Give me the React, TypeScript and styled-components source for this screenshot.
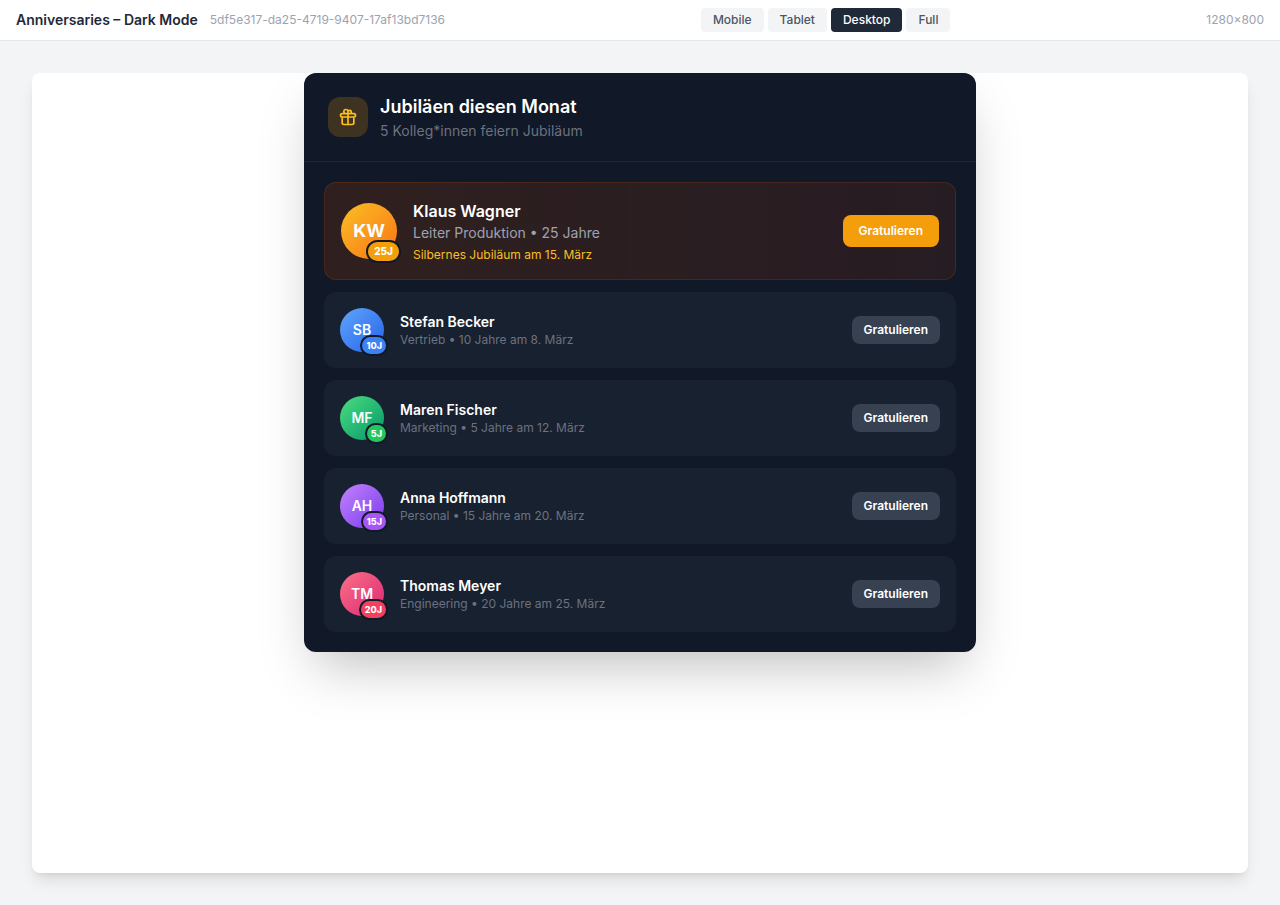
import React from "react";
import styled, { createGlobalStyle, css } from "styled-components";

const GlobalStyle = createGlobalStyle`
  *, *::before, *::after { box-sizing: border-box; }
  body {
    margin: 0;
    background: #f3f4f6;
    font-family: Inter, "Liberation Sans", sans-serif;
    color: #1f2937;
  }
  h1, h2, h3, p, ul { margin: 0; padding: 0; }
  button { font-family: inherit; border: 0; cursor: pointer; }
`;

const Toolbar = styled.header`
  display: flex;
  align-items: center;
  justify-content: space-between;
  padding: 8px 16px;
  background: #ffffff;
  border-bottom: 1px solid #e5e7eb;
`;

const TitleGroup = styled.div`
  display: flex;
  align-items: center;
  gap: 12px;
`;

const PageTitle = styled.h1`
  font-size: 14px;
  line-height: 20px;
  font-weight: 600;
`;

const MetaText = styled.span`
  font-size: 12px;
  line-height: 16px;
  color: #9ca3af;
`;

const SizeSwitch = styled.nav`
  display: flex;
  gap: 4px;
`;

const SizeButton = styled.button<{ $active: boolean }>`
  padding: 4px 12px;
  border-radius: 4px;
  font-size: 12px;
  line-height: 16px;
  font-weight: 500;
  color: ${(p) => (p.$active ? "#ffffff" : "#4b5563")};
  background: ${(p) => (p.$active ? "#1f2937" : "#f3f4f6")};
`;

const Stage = styled.main`
  padding: 32px;
`;

const Frame = styled.div`
  max-width: 1280px;
  min-height: 800px;
  margin: 0 auto;
  background: #ffffff;
  border-radius: 8px;
  overflow: hidden;
  box-shadow: 0 10px 15px -3px rgba(0, 0, 0, 0.1), 0 4px 6px -4px rgba(0, 0, 0, 0.1);
`;

const Card = styled.section`
  max-width: 672px;
  margin: 0 auto;
  overflow: hidden;
  background: #111827;
  border-radius: 12px;
  box-shadow: 0 25px 50px -12px rgba(0, 0, 0, 0.25);
`;

const CardHeader = styled.div`
  display: flex;
  align-items: center;
  gap: 12px;
  padding: 20px 24px;
  border-bottom: 1px solid #1f2937;
`;

const IconTile = styled.div`
  display: flex;
  align-items: center;
  justify-content: center;
  width: 40px;
  height: 40px;
  border-radius: 12px;
  background: rgba(245, 158, 11, 0.2);
  color: #fbbf24;
`;

const CardTitle = styled.h2`
  font-size: 18px;
  line-height: 28px;
  font-weight: 600;
  color: #ffffff;
`;

const CardSubtitle = styled.p`
  font-size: 14px;
  line-height: 20px;
  color: #6b7280;
`;

const PeopleList = styled.ul`
  display: flex;
  flex-direction: column;
  gap: 12px;
  padding: 20px;
  list-style: none;
`;

const PersonRow = styled.li<{ $featured?: boolean }>`
  display: flex;
  align-items: center;
  gap: 16px;
  padding: 16px;
  border-radius: 12px;
  background: rgba(31, 41, 55, 0.5);
  ${(p) =>
    p.$featured &&
    css`
      background: linear-gradient(to right, rgba(120, 53, 15, 0.3), rgba(124, 45, 18, 0.2));
      border: 1px solid rgba(146, 64, 14, 0.3);
    `}
`;

const Avatar = styled.div<{ $from: string; $to: string; $large?: boolean }>`
  position: relative;
  display: flex;
  flex-shrink: 0;
  align-items: center;
  justify-content: center;
  width: ${(p) => (p.$large ? 56 : 44)}px;
  height: ${(p) => (p.$large ? 56 : 44)}px;
  border-radius: 50%;
  background: linear-gradient(to bottom right, ${(p) => p.$from}, ${(p) => p.$to});
  color: #ffffff;
  font-size: ${(p) => (p.$large ? 18 : 14)}px;
  line-height: 20px;
  font-weight: ${(p) => (p.$large ? 700 : 600)};
`;

const YearBadge = styled.span<{ $color: string; $large?: boolean }>`
  position: absolute;
  right: -4px;
  bottom: -4px;
  padding: 2px ${(p) => (p.$large ? 6 : 4)}px;
  border: 2px solid #111827;
  border-radius: 999px;
  background: ${(p) => p.$color};
  font-size: ${(p) => (p.$large ? 10 : 9)}px;
  line-height: ${(p) => (p.$large ? 15 : 13)}px;
  font-weight: 800;
`;

const PersonInfo = styled.div`
  flex: 1;
  min-width: 0;
`;

const PersonName = styled.h3<{ $large?: boolean }>`
  font-size: ${(p) => (p.$large ? 16 : 14)}px;
  line-height: ${(p) => (p.$large ? 24 : 20)}px;
  font-weight: 600;
  color: #ffffff;
`;

const PersonDetail = styled.p<{ $large?: boolean }>`
  font-size: ${(p) => (p.$large ? 14 : 12)}px;
  line-height: ${(p) => (p.$large ? 20 : 16)}px;
  color: ${(p) => (p.$large ? "#9ca3af" : "#6b7280")};
`;

const PersonNote = styled.p`
  margin-top: 4px;
  font-size: 12px;
  line-height: 16px;
  color: #fbbf24;
`;

const CongratulateButton = styled.button<{ $primary?: boolean }>`
  flex-shrink: 0;
  padding: ${(p) => (p.$primary ? "8px 16px" : "6px 12px")};
  border-radius: 8px;
  background: ${(p) => (p.$primary ? "#f59e0b" : "#374151")};
  color: #ffffff;
  font-size: 12px;
  line-height: 16px;
  font-weight: 600;
`;

interface Person {
  name: string;
  initials: string;
  years: number;
  detail: string;
  note?: string;
  from: string;
  to: string;
  badge: string;
}

const people: Person[] = [
  {
    name: "Klaus Wagner",
    initials: "KW",
    years: 25,
    detail: "Leiter Produktion • 25 Jahre",
    note: "Silbernes Jubiläum am 15. März",
    from: "#fbbf24",
    to: "#f97316",
    badge: "#f59e0b",
  },
  {
    name: "Stefan Becker",
    initials: "SB",
    years: 10,
    detail: "Vertrieb • 10 Jahre am 8. März",
    from: "#60a5fa",
    to: "#2563eb",
    badge: "#3b82f6",
  },
  {
    name: "Maren Fischer",
    initials: "MF",
    years: 5,
    detail: "Marketing • 5 Jahre am 12. März",
    from: "#4ade80",
    to: "#059669",
    badge: "#22c55e",
  },
  {
    name: "Anna Hoffmann",
    initials: "AH",
    years: 15,
    detail: "Personal • 15 Jahre am 20. März",
    from: "#c084fc",
    to: "#7c3aed",
    badge: "#a855f7",
  },
  {
    name: "Thomas Meyer",
    initials: "TM",
    years: 20,
    detail: "Engineering • 20 Jahre am 25. März",
    from: "#fb7185",
    to: "#db2777",
    badge: "#f43f5e",
  },
];

const sizes = ["Mobile", "Tablet", "Desktop", "Full"];

function GiftIcon() {
  return (
    <svg
      width="20"
      height="20"
      viewBox="0 0 24 24"
      fill="none"
      stroke="currentColor"
      strokeWidth="2"
      strokeLinecap="round"
      strokeLinejoin="round"
      aria-hidden="true"
    >
      <path d="M12 8v13m0-13V6a2 2 0 112 2h-2zm0 0V5.5A2.5 2.5 0 109.5 8H12zm-7 4h14M5 12a2 2 0 110-4h14a2 2 0 110 4M5 12v7a2 2 0 002 2h10a2 2 0 002-2v-7" />
    </svg>
  );
}

export default function App() {
  const [size, setSize] = React.useState("Desktop");

  return (
    <>
      <GlobalStyle />
      <Toolbar>
        <TitleGroup>
          <PageTitle>Anniversaries – Dark Mode</PageTitle>
          <MetaText>5df5e317-da25-4719-9407-17af13bd7136</MetaText>
        </TitleGroup>
        <SizeSwitch>
          {sizes.map((s) => (
            <SizeButton key={s} type="button" $active={s === size} onClick={() => setSize(s)}>
              {s}
            </SizeButton>
          ))}
        </SizeSwitch>
        <MetaText>1280×800</MetaText>
      </Toolbar>
      <Stage>
        <Frame>
          <Card>
            <CardHeader>
              <IconTile>
                <GiftIcon />
              </IconTile>
              <div>
                <CardTitle>Jubiläen diesen Monat</CardTitle>
                <CardSubtitle>5 Kolleg*innen feiern Jubiläum</CardSubtitle>
              </div>
            </CardHeader>
            <PeopleList>
              {people.map((p) => {
                const featured = Boolean(p.note);
                return (
                  <PersonRow key={p.name} $featured={featured}>
                    <Avatar $from={p.from} $to={p.to} $large={featured}>
                      {p.initials}
                      <YearBadge $color={p.badge} $large={featured}>
                        {`${p.years}J`}
                      </YearBadge>
                    </Avatar>
                    <PersonInfo>
                      <PersonName $large={featured}>{p.name}</PersonName>
                      <PersonDetail $large={featured}>{p.detail}</PersonDetail>
                      {p.note && <PersonNote>{p.note}</PersonNote>}
                    </PersonInfo>
                    <CongratulateButton type="button" $primary={featured}>
                      Gratulieren
                    </CongratulateButton>
                  </PersonRow>
                );
              })}
            </PeopleList>
          </Card>
        </Frame>
      </Stage>
    </>
  );
}
